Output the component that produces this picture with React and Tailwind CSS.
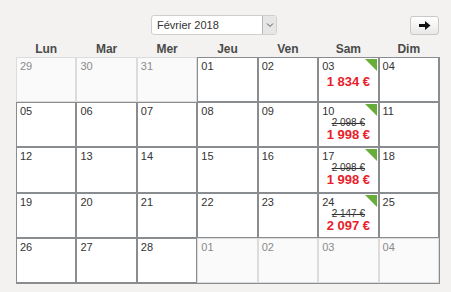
import React from "react";

const rows = [
  [["29", false], ["30", false], ["31", false], ["01", true], ["02", true], ["03", true, null, "1 834 €"], ["04", true]],
  [["05", true], ["06", true], ["07", true], ["08", true], ["09", true], ["10", true, "2 098 €", "1 998 €"], ["11", true]],
  [["12", true], ["13", true], ["14", true], ["15", true], ["16", true], ["17", true, "2 098 €", "1 998 €"], ["18", true]],
  [["19", true], ["20", true], ["21", true], ["22", true], ["23", true], ["24", true, "2 147 €", "2 097 €"], ["25", true]],
  [["26", true], ["27", true], ["28", true], ["01", false], ["02", false], ["03", false], ["04", false]],
];

const days = ["Lun", "Mar", "Mer", "Jeu", "Ven", "Sam", "Dim"];

function Cell({ d, inMonth, old, price }) {
  return (
    <div
      className={
        "relative px-[4px] pt-[4px] " +
        (inMonth
          ? "bg-white shadow-[inset_0_0_0_1px_#8a8d90]"
          : "bg-[#fafafa] shadow-[inset_0_0_0_1px_#dcdcdc]")
      }
    >
      <div className={"text-[11px] leading-[11px] " + (inMonth ? "text-[#333]" : "text-[#8a8a8a]")}>{d}</div>
      {old && (
        <div className="text-center text-[10px] leading-[9px] mt-[1px] text-[#333] line-through">{old}</div>
      )}
      {price && (
        <div className={"text-center text-[13px] leading-[13px] font-bold text-[#e8202a] " + (old ? "mt-[1px]" : "mt-[3px]")}>
          {price}
        </div>
      )}
      {price && (
        <div className="absolute top-[2px] right-[2px] w-0 h-0 border-l-[12px] border-l-transparent border-t-[12px] border-t-[#66ad3a]" />
      )}
    </div>
  );
}

export default function App() {
  return (
    <div
      className="w-[451px] h-[292px] bg-[#f3f2f0] overflow-hidden"
      style={{ fontFamily: '"Liberation Sans", Arial, sans-serif' }}
    >
      <div className="flex items-center pt-[15px] pl-[151px] pr-[12px]">
        <div className="flex h-[20px] w-[126px] bg-white border border-[#cfcfcf] rounded-[3px] overflow-hidden">
          <div className="flex-1 text-[11px] leading-[18px] pl-[5px] text-[#333]">Février 2018</div>
          <div className="w-[14px] bg-[#e6e6e6] border-l border-[#b8b8b8] flex items-center justify-center">
            <svg width="8" height="6" viewBox="0 0 8 6">
              <path d="M1 1.5 L4 4.5 L7 1.5" fill="none" stroke="#555" strokeWidth="1" />
            </svg>
          </div>
        </div>
        <div className="ml-auto flex items-center justify-center w-[29px] h-[19px] rounded-[3px] border border-[#c8c8c8] bg-gradient-to-b from-white to-[#e8e8e8]">
          <svg width="12" height="9" viewBox="0 0 12 9">
            <path d="M0 3 H6 V0 L11.5 4.5 L6 9 V6 H0 Z" fill="#111" />
          </svg>
        </div>
      </div>
      <div className="ml-[16px] mt-[6px] w-[424px]">
        <div className="grid grid-cols-7 h-[16px] w-[423px]">
          {days.map((d) => (
            <div key={d} className="text-center text-[12px] leading-[16px] font-bold text-[#4a4a4a]">
              {d}
            </div>
          ))}
        </div>
        <div className="grid grid-cols-7 grid-rows-5 h-[227px] w-[424px] border-r border-b border-[#8a8d90]">
          {rows.map((r, i) =>
            r.map(([d, inMonth, old, price], j) => (
              <Cell key={i + "-" + j} d={d} inMonth={inMonth} old={old} price={price} />
            ))
          )}
        </div>
      </div>
    </div>
  );
}
